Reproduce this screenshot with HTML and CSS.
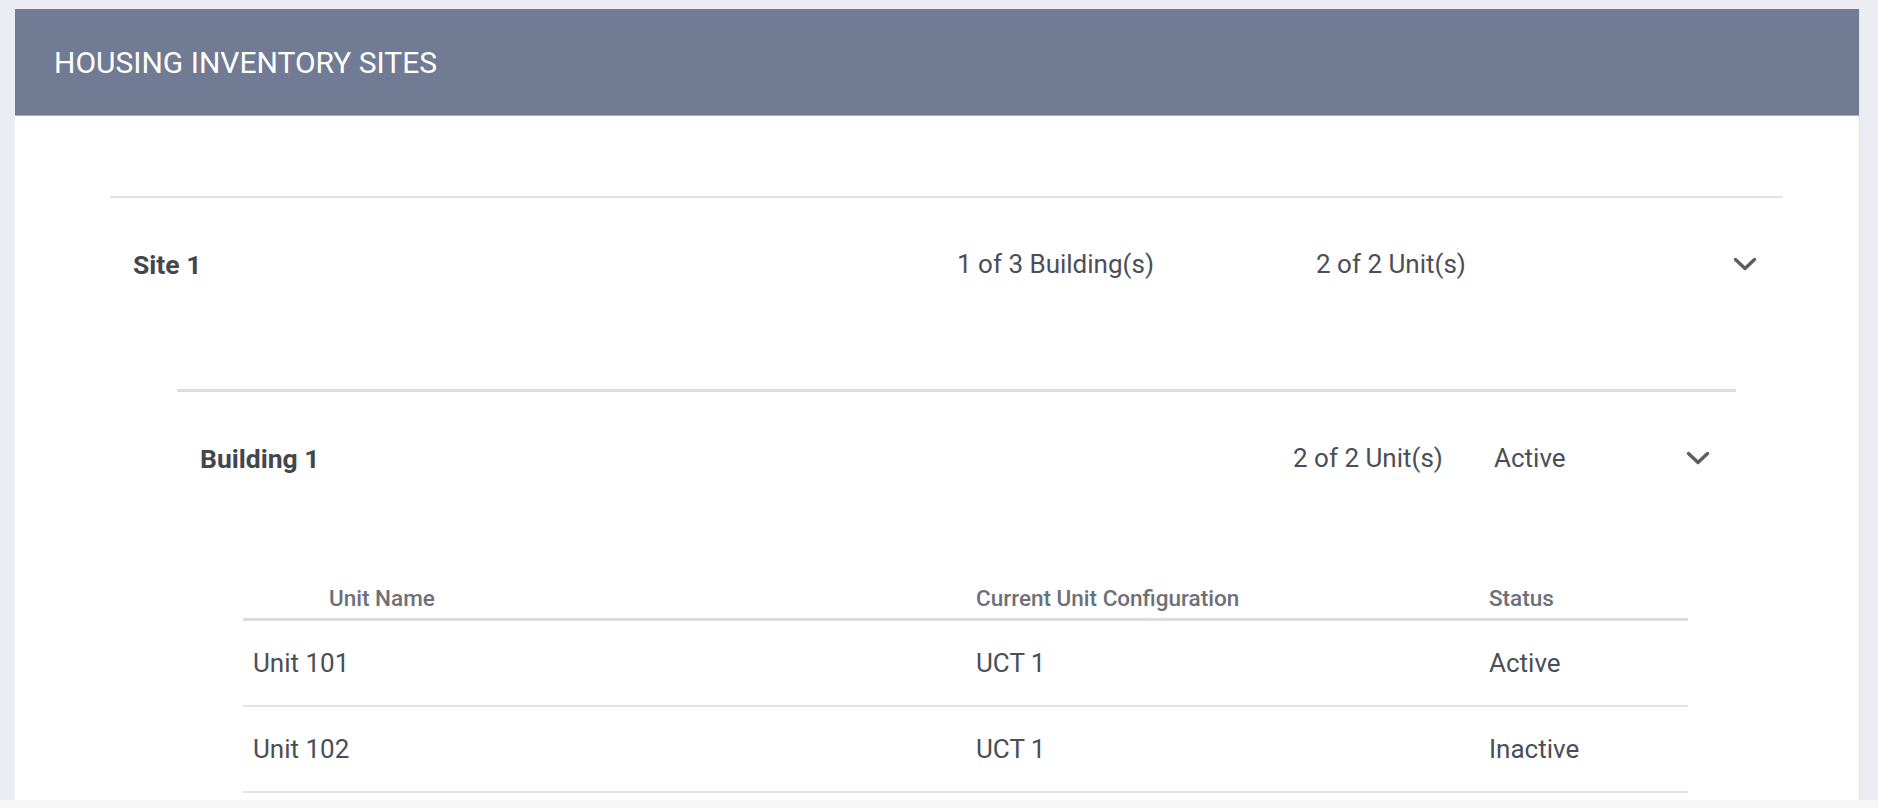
FILE: index.html
```html
<!DOCTYPE html>
<html lang="en">
<head>
<meta charset="utf-8">
<title>Housing Inventory Sites</title>
<link rel="stylesheet" href="styles.css">
</head>
<body>
<div class="page">
  <section class="panel">
    <header class="panel-header">
      <h1 class="panel-title">HOUSING INVENTORY SITES</h1>
    </header>
    <div class="panel-body">
      <div class="site">
        <div class="site-row">
          <span class="site-name">Site 1</span>
          <span class="site-meta">1 of 3 Building(s)</span>
          <span class="site-meta">2 of 2 Unit(s)</span>
          <svg class="chevron" viewBox="0 0 24 14" width="24" height="14"><path d="M2.5 2.5 L12 11.5 L21.5 2.5"/></svg>
        </div>
        <div class="building">
          <div class="building-row">
            <span class="site-name">Building 1</span>
            <span class="site-meta">2 of 2 Unit(s)</span>
            <span class="site-meta">Active</span>
            <svg class="chevron" viewBox="0 0 24 14" width="24" height="14"><path d="M2.5 2.5 L12 11.5 L21.5 2.5"/></svg>
          </div>
          <div class="units">
            <div class="units-head">
              <span class="th th-first">Unit Name</span>
              <span class="th">Current Unit Configuration</span>
              <span class="th">Status</span>
            </div>
            <div class="units-row">
              <span class="td td-first">Unit 101</span>
              <span class="td">UCT 1</span>
              <span class="td">Active</span>
            </div>
            <div class="units-row">
              <span class="td td-first">Unit 102</span>
              <span class="td">UCT 1</span>
              <span class="td">Inactive</span>
            </div>
          </div>
        </div>
      </div>
    </div>
  </section>
</div>
<div class="bottom-fade"></div>
</body>
</html>
```
FILE: styles.css
```css
html, body {
  margin: 0;
  padding: 0;
}
body {
  width: 1878px;
  height: 808px;
  overflow: hidden;
  background: #ecedf2;
  font-family: Roboto, "Liberation Sans", Arial, sans-serif;
  color: #4b4e57;
}
.page {
  height: 800px;
  overflow: hidden;
  padding: 9px 0 0 15px;
  box-sizing: border-box;
}
.panel {
  width: 1845px;
  background: #ffffff;
  min-height: 900px;
  border-right: 1px solid #e2e3e8;
  box-sizing: border-box;
}
.panel-header {
  height: 107px;
  background: #717b93;
  border-bottom: 1px solid #a9afbd;
  box-sizing: border-box;
  display: flex;
  align-items: center;
  padding-left: 39px;
}
.panel-title {
  margin: 0;
  font-size: 30px;
  font-weight: 400;
  color: #ffffff;
}
.panel-body {
  padding: 80px 76px 0 95px;
}
.site {
  border-top: 2px solid #e3e3e3;
}
.site-row, .building-row {
  height: 132px;
  display: grid;
  align-items: center;
  padding: 0 26px 0 23px;
  font-size: 26px;
}
.site-row {
  grid-template-columns: 824px 359px 1fr 24px;
}
.site-name {
  font-size: 26.5px;
  font-weight: 700;
  color: #44464e;
}
.site-meta {
  color: #4b4e57;
}
.chevron {
  display: block;
  fill: none;
  stroke: #5b5e67;
  stroke-width: 3.4;
  stroke-linecap: round;
  stroke-linejoin: round;
}
.building {
  margin: 59px 47px 0 67px;
  border-top: 3px solid #dddddd;
}
.building-row {
  grid-template-columns: 1093px 201px 1fr 24px;
}
.units {
  margin: 54px 48px 0 66px;
}
.units-head, .units-row {
  display: grid;
  grid-template-columns: 733px 513px 1fr;
  align-items: center;
}
.units-head {
  height: 40px;
  border-bottom: 3px solid #dcdcdc;
}
.th {
  font-size: 22.5px;
  font-weight: 500;
  color: #6d7079;
}
.th-first {
  padding-left: 86px;
}
.units-row {
  height: 84px;
  border-bottom: 2px solid #e4e4e4;
  font-size: 26px;
  color: #4b4e57;
}
.td-first {
  padding-left: 10px;
}
.bottom-fade {
  height: 8px;
  background: #f6f6f7;
}
```
